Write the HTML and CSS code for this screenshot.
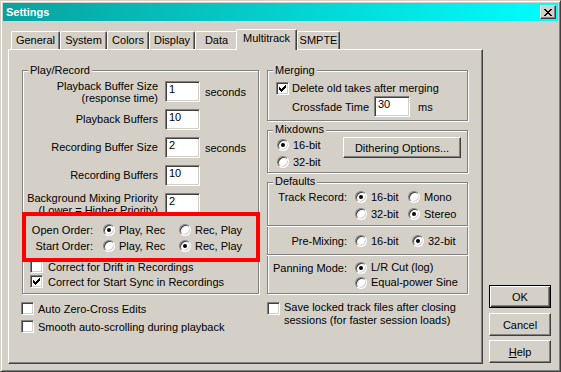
FILE: index.html
```html
<!DOCTYPE html>
<html>
<head>
<meta charset="utf-8">
<link rel="stylesheet" href="styles.css">
</head>
<body>
<div class="window">
  <div class="titlebar">
    <span class="title">Settings</span>
    <span class="close"><svg width="8" height="7" viewBox="0 0 8 7" shape-rendering="crispEdges"><path d="M0 0h2v1h-2zM6 0h2v1h-2zM1 1h2v1h-2zM5 1h2v1h-2zM2 2h4v1h-4zM3 3h2v1h-2zM2 4h4v1h-4zM1 5h2v1h-2zM5 5h2v1h-2zM0 6h2v1h-2zM6 6h2v1h-2z" fill="#000"/></svg></span>
  </div>
  <div class="client">
    <div class="tabs">
      <div class="tab">General</div>
      <div class="tab">System</div>
      <div class="tab">Colors</div>
      <div class="tab">Display</div>
      <div class="tab">Data</div>
      <div class="tab sel">Multitrack</div>
      <div class="tab">SMPTE</div>
    </div>
    <div class="main">
      <div class="panel">
        <div class="col">
          <div class="group playrec">
            <div class="gtitle">Play/Record</div>
            <div class="fields">
              <div class="lbl two">Playback Buffer Size<br>(response time)</div>
              <div class="edit">1</div>
              <div class="unit">seconds</div>
              <div class="lbl">Playback Buffers</div>
              <div class="edit">10</div>
              <div class="unit"></div>
              <div class="lbl">Recording Buffer Size</div>
              <div class="edit">2</div>
              <div class="unit">seconds</div>
              <div class="lbl">Recording Buffers</div>
              <div class="edit">10</div>
              <div class="unit"></div>
              <div class="lbl two">Background Mixing Priority<br>(Lower = Higher Priority)</div>
              <div class="edit">2</div>
              <div class="unit"></div>
            </div>
            <div class="order">
              <div class="olbl">Open Order:</div>
              <div class="opt"><span class="radio on"></span>Play, Rec</div>
              <div class="opt"><span class="radio"></span>Rec, Play</div>
              <div class="olbl">Start Order:</div>
              <div class="opt"><span class="radio"></span>Play, Rec</div>
              <div class="opt"><span class="radio on"></span>Rec, Play</div>
            </div>
            <div class="checks">
              <div class="cbrow"><span class="cb"></span>Correct for Drift in Recordings</div>
              <div class="cbrow"><span class="cb"><svg width="7" height="7" viewBox="0 0 7 7" shape-rendering="crispEdges"><path d="M0 2h1v3h-1zM1 3h1v3h-1zM2 4h1v3h-1zM3 3h1v3h-1zM4 2h1v3h-1zM5 1h1v3h-1zM6 0h1v3h-1z" fill="#000"/></svg></span>Correct for Start Sync in Recordings</div>
            </div>
          </div>
          <div class="outer">
            <div class="cbrow"><span class="cb"></span>Auto Zero-Cross Edits</div>
            <div class="cbrow"><span class="cb"></span>Smooth auto-scrolling during playback</div>
          </div>
        </div>
        <div class="col">
          <div class="group merging">
            <div class="gtitle">Merging</div>
            <div class="cbrow mrow"><span class="cb"><svg width="7" height="7" viewBox="0 0 7 7" shape-rendering="crispEdges"><path d="M0 2h1v3h-1zM1 3h1v3h-1zM2 4h1v3h-1zM3 3h1v3h-1zM4 2h1v3h-1zM5 1h1v3h-1zM6 0h1v3h-1z" fill="#000"/></svg></span>Delete old takes after merging</div>
            <div class="xfade">
              <div>Crossfade Time</div>
              <div class="edit wide">30</div>
              <div class="ms">ms</div>
            </div>
          </div>
          <div class="group mixdowns">
            <div class="gtitle">Mixdowns</div>
            <div class="mixbody">
              <div class="radios">
                <div class="opt"><span class="radio on"></span>16-bit</div>
                <div class="opt"><span class="radio"></span>32-bit</div>
              </div>
              <div class="btn dither">Dithering Options...</div>
            </div>
          </div>
          <div class="group defaults">
            <div class="gtitle">Defaults</div>
            <div class="defgrid track">
              <div class="dlbl">Track Record:</div>
              <div class="opt"><span class="radio on"></span>16-bit</div>
              <div class="opt"><span class="radio"></span>Mono</div>
              <div></div>
              <div class="opt"><span class="radio"></span>32-bit</div>
              <div class="opt"><span class="radio on"></span>Stereo</div>
            </div>
            <div class="sep s1"></div>
            <div class="defgrid premix">
              <div class="dlbl">Pre-Mixing:</div>
              <div class="opt"><span class="radio"></span>16-bit</div>
              <div class="opt shift"><span class="radio on"></span>32-bit</div>
            </div>
            <div class="sep s2"></div>
            <div class="defgrid panning">
              <div class="dlbl">Panning Mode:</div>
              <div class="opt span"><span class="radio on"></span>L/R Cut (log)</div>
              <div></div>
              <div class="opt span"><span class="radio"></span>Equal-power Sine</div>
            </div>
          </div>
          <div class="cbrow save"><span class="cb"></span><span class="savetext">Save locked track files after closing<br>sessions (for faster session loads)</span></div>
        </div>
      </div>
      <div class="buttons">
        <div class="btn default">OK</div>
        <div class="btn cancel">Cancel</div>
        <div class="btn help"><span><u>H</u>elp</span></div>
      </div>
    </div>
  </div>
</div>
</body>
</html>
```

FILE: styles.css
```css
* { box-sizing: border-box; }
body {
  margin: 0;
  font: 11px "Liberation Sans", Arial, sans-serif;
  color: #000;
  background: #d4d0c8;
}
.window {
  width: 561px;
  height: 372px;
  background: #d4d0c8;
  border: 1px solid;
  border-color: #d4d0c8 #404040 #404040 #d4d0c8;
  box-shadow: inset 1px 1px #fff, inset -1px -1px #808080;
  padding: 2px;
}
.titlebar {
  height: 18px;
  background: linear-gradient(to right, #08a29e, #00ffff);
  display: flex;
  align-items: center;
  justify-content: space-between;
  padding: 0 2px 0 3px;
}
.title {
  color: #fff;
  font-weight: bold;
  font-size: 11px;
  line-height: 18px;
}
.close {
  width: 16px;
  height: 14px;
  background: #d4d0c8;
  border: 1px solid;
  border-color: #fff #404040 #404040 #fff;
  box-shadow: inset -1px -1px #808080;
  display: flex;
  align-items: center;
  justify-content: center;
}
.client { padding-left: 5px; }
.tabs {
  margin-top: 8px;
  height: 20px;
  display: flex;
  align-items: flex-end;
  padding-left: 3px;
  position: relative;
  z-index: 1;
}
.tab {
  height: 18px;
  border-top: 1px solid #fff;
  border-left: 1px solid #fff;
  border-right: 1px solid #404040;
  box-shadow: inset -1px 0 #808080;
  border-radius: 2px 2px 0 0;
  text-align: center;
  line-height: 16px;
  background: #d4d0c8;
}
.tab:nth-child(1) { width: 49px; }
.tab:nth-child(2) { width: 47px; }
.tab:nth-child(3) { width: 42px; }
.tab:nth-child(4) { width: 46px; }
.tab:nth-child(5) { width: 43px; }
.tab:nth-child(7) { width: 43px; }
.tab.sel {
  width: 61px;
  height: 21px;
  margin-left: -2px;
  margin-bottom: -1px;
  line-height: 17px;
  position: relative;
  z-index: 1;
}
.main { display: flex; gap: 6px; }
.panel {
  width: 475px;
  height: 315px;
  border: 1px solid;
  border-color: #fff #404040 #404040 #fff;
  box-shadow: inset -1px -1px #808080;
  padding: 20px 0 0 13px;
  display: grid;
  grid-template-columns: 237px 201px;
  column-gap: 8px;
  align-content: start;
  align-items: start;
}
.group {
  border: 1px solid #808080;
  box-shadow: inset 1px 1px #fff, 1px 1px #fff;
}
.gtitle {
  width: max-content;
  margin: -7px 0 0 5px;
  padding: 0 2px;
  background: #d4d0c8;
  line-height: 13px;
}
.mixdowns .gtitle, .defaults .gtitle { margin-top: -8px; }
.fields {
  margin-top: 4px;
  display: grid;
  grid-template-columns: 142px 40px auto;
  grid-auto-rows: 21px;
  row-gap: 7px;
  align-items: center;
}
.lbl {
  text-align: right;
  padding-right: 7px;
  white-space: nowrap;
  line-height: 13px;
}
.lbl.two { line-height: 12px; }
.edit {
  width: 35px;
  height: 21px;
  background: #fff;
  border: 1px solid;
  border-color: #808080 #fff #fff #808080;
  box-shadow: inset 1px 1px #404040, inset -1px -1px #d4d0c8;
  padding: 1px 2px 0 3px;
  line-height: 13px;
}
.edit.wide { width: 36px; }
.order {
  position: relative;
  margin: -2px -2px 0 -1px;
  border: 4px solid #ff0000;
  padding: 6px 0 4px;
  display: grid;
  grid-template-columns: 67px 66px 66px;
  column-gap: 10px;
  grid-auto-rows: 16px;
  align-items: center;
}
.olbl { text-align: right; white-space: nowrap; }
.opt {
  display: flex;
  align-items: center;
  gap: 4px;
  white-space: nowrap;
  line-height: 13px;
}
.radio {
  flex: none;
  position: relative;
  width: 12px;
  height: 12px;
  border-radius: 50%;
  background: #fff;
  border: 1px solid;
  border-color: #808080 #fff #fff #808080;
  box-shadow: inset 1px 1px #404040, inset -1px -1px #d4d0c8;
}
.radio.on::after {
  content: "";
  position: absolute;
  left: 3px;
  top: 3px;
  width: 4px;
  height: 4px;
  border-radius: 50%;
  background: #000;
}
.cbrow {
  display: flex;
  align-items: center;
  gap: 4px;
  height: 15px;
  white-space: nowrap;
}
.cb {
  flex: none;
  width: 13px;
  height: 13px;
  background: #fff;
  border: 1px solid;
  border-color: #808080 #fff #fff #808080;
  box-shadow: inset 1px 1px #404040, inset -1px -1px #d4d0c8;
  display: flex;
  align-items: center;
  justify-content: center;
}
.checks { margin: -3px 0 4px 7px; }
.checks .cbrow { gap: 5px; }
.outer {
  margin: 7px 0 0 -1px;
  display: flex;
  flex-direction: column;
  gap: 3px;
}
.mrow { margin: 4px 0 0 8px; height: 14px; gap: 3px; }
.xfade {
  display: grid;
  grid-template-columns: 82px 36px auto;
  margin: 1px 0 3px 24px;
  align-items: center;
}
.ms { margin-left: 8px; }
.mixdowns { margin-top: 9px; }
.mixbody {
  display: flex;
  align-items: flex-start;
  margin-top: 1px;
  padding-bottom: 2px;
}
.radios {
  width: 75px;
  padding-left: 9px;
  display: flex;
  flex-direction: column;
  gap: 1px;
}
.radios .opt { height: 16px; gap: 4px; }
.btn {
  background: #d4d0c8;
  border: 1px solid;
  border-color: #fff #404040 #404040 #fff;
  box-shadow: inset -1px -1px #808080;
  display: flex;
  align-items: center;
  justify-content: center;
  white-space: nowrap;
}
.dither { width: 118px; height: 21px; }
.defaults { margin-top: 9px; }
.defgrid {
  display: grid;
  grid-template-columns: 87px 53px auto;
  align-items: center;
}
.dlbl { text-align: right; padding-right: 8px; white-space: nowrap; }
.track { margin-top: 1px; grid-auto-rows: 16px; row-gap: 1px; }
.premix { margin-top: 6px; grid-auto-rows: 16px; }
.panning { margin-top: 4px; grid-auto-rows: 15px; margin-bottom: 3px; }
.opt.span { grid-column: span 2; }
.opt.shift { margin-left: 4px; }
.sep {
  border-top: 1px solid #808080;
  border-bottom: 1px solid #fff;
  margin: 0 -1px;
}
.s1 { margin-top: 3px; }
.s2 { margin-top: 5px; }
.save {
  margin-top: 7px;
  height: auto;
  align-items: flex-start;
}
.save .cb { margin-top: 1px; }
.savetext { line-height: 13px; }
.buttons {
  width: 62px;
  display: flex;
  flex-direction: column;
  justify-content: flex-end;
  padding-bottom: 1px;
}
.buttons .btn { height: 23px; }
.btn.default {
  border: 1px solid #000;
  box-shadow: inset 1px 1px #fff, inset -1px -1px #404040, inset -2px -2px #808080;
}
.cancel { margin-top: 5px; }
.help { margin-top: 4px; }
```
